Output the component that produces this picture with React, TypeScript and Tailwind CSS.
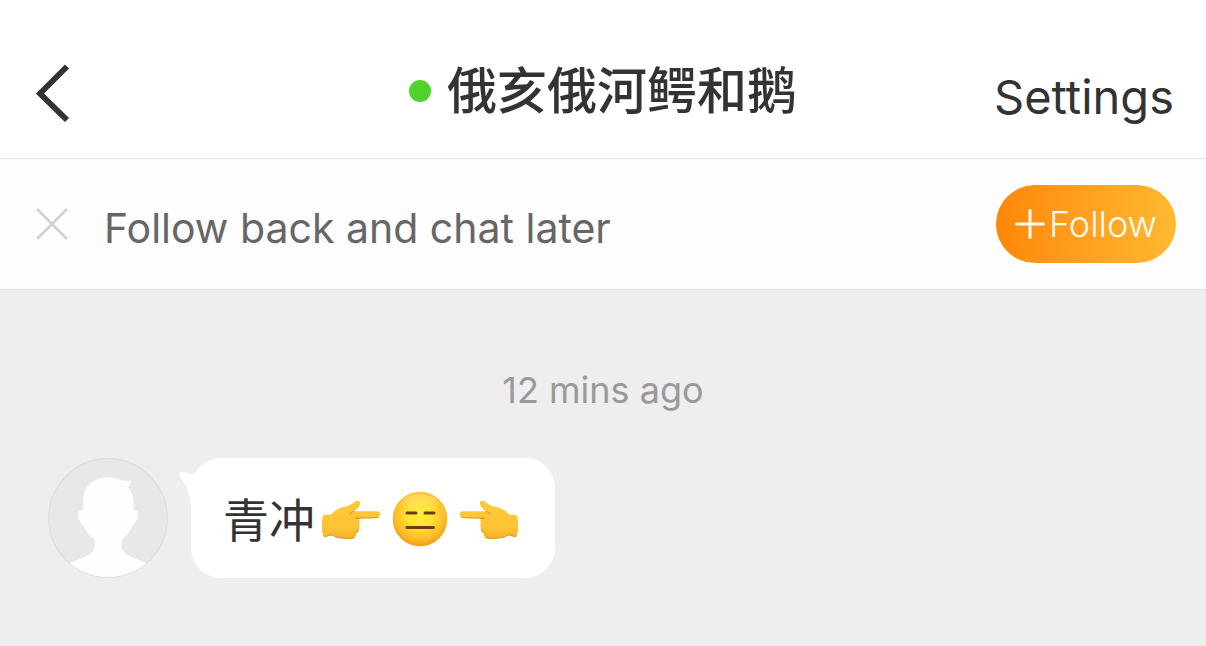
import React from "react";

interface IconProps {
  className?: string;
}

const BackIcon = ({ className }: IconProps) => (
  <svg viewBox="0 0 34 58" className={className} fill="none" stroke="#333333" strokeWidth="5.8" aria-hidden="true">
    <path d="M31 2.500 4 29.500 31 56" />
  </svg>
);

const CloseIcon = ({ className }: IconProps) => (
  <svg viewBox="0 0 32 32" className={className} fill="none" stroke="#cfcfcf" strokeWidth="2.6" strokeLinecap="round" aria-hidden="true">
    <path d="M2 2 30 30M30 2 2 30" />
  </svg>
);

const PlusIcon = ({ className }: IconProps) => (
  <svg viewBox="0 0 30 30" className={className} fill="none" stroke="#fffaf0" strokeWidth="3" strokeLinecap="round" aria-hidden="true">
    <path d="M15 1.5v27M1.5 15h27" />
  </svg>
);

const Avatar = ({ className }: IconProps) => (
  <svg viewBox="0 0 120 120" className={className} role="img" aria-label="Avatar">
    <defs>
      <clipPath id="avatar-clip">
        <circle cx="60" cy="59" r="60" />
      </clipPath>
    </defs>
    <circle cx="60" cy="60" r="59.3" fill="#e8e8e8" stroke="#dcdcdc" strokeWidth="1.2" />
    <path
      clipPath="url(#avatar-clip)"
      fill="#fefefe"
      d="M35 52V44C35 29 45 19.500 60 19.500C67 19.500 72 23 83 23C83 26 81 28 80 29.500C84 34 85.500 39 85.500 45V52C89 52 90.500 54 90 58C89 64 86 66 84 69C81 74 79 78 75 81C73 84 73 88 74 91C79 99 89 101 98 105L108 120H12L22 105C31 101 41 99 46 91C47.500 88 47 84 45.500 81C41 78 39 74 36 69C34 66 31 64 30 58C29.500 54 31 52 35 52Z"
    />
  </svg>
);

const PointingHand = ({ className }: IconProps) => (
  <svg viewBox="0 0 183 126" className={className} aria-hidden="true">
    <defs>
      <linearGradient id="hand-fill" x1="0" y1="0" x2="0" y2="1">
        <stop offset="0" stopColor="#ffc83a" />
        <stop offset="0.7" stopColor="#ffc335" />
        <stop offset="1" stopColor="#f5b02c" />
      </linearGradient>
    </defs>
    <path
      fill="url(#hand-fill)"
      d="M10 52C17 48 23 52 30 50C38 48 39 42 47 37C60 27 80 27 89 22C98 17 102 12 108 9C116 6 123 12 120 21C117 30 108 34 102 40H171C184 40 184 59 171 60L117 62C118 67 121 70 117 76C121 83 119 88 115 93C117 101 113 104 109 105C109 116 105 121 97 122C80 125 64 121 50 119C41 114 37 112 30 113C23 114 18 119 12 117C7 108 5 98 6 82C6 68 6 59 10 52Z"
    />
    <path d="M102 40C96 43 92 46 88 48M106 61H118M109 105C111 104 115 100 115 93" fill="none" stroke="#db8c1e" strokeWidth="3" strokeLinecap="round" />
    <path d="M116 60C135 60 160 60 174 58M12 115C18 117 23 111 31 111C40 111 44 118 54 118C74 122 91 122 102 119" fill="none" stroke="#e39b24" strokeWidth="3" strokeLinecap="round" />
  </svg>
);

const ExpressionlessFace = ({ className }: IconProps) => (
  <svg viewBox="0 0 56 56" className={className} aria-hidden="true">
    <defs>
      <radialGradient id="face-fill" cx="0.5" cy="0.42" r="0.6">
        <stop offset="0" stopColor="#ffee35" />
        <stop offset="0.4" stopColor="#ffe033" />
        <stop offset="0.78" stopColor="#fdb928" />
        <stop offset="1" stopColor="#ee9312" />
      </radialGradient>
      <linearGradient id="face-shine" x1="0" y1="0" x2="0" y2="1">
        <stop offset="0" stopColor="#ffe489" stopOpacity="0.55" />
        <stop offset="1" stopColor="#ffe489" stopOpacity="0" />
      </linearGradient>
    </defs>
    <circle cx="28" cy="28" r="27.3" fill="url(#face-fill)" />
    <ellipse cx="28" cy="12" rx="18" ry="9" fill="url(#face-shine)" />
    <path d="M15 22h9M33 22h9M15 36.500h26.500" fill="none" stroke="#6b3c08" strokeWidth="3" strokeLinecap="round" />
  </svg>
);

const Header = () => (
  <header className="grid grid-cols-[1fr_auto_1fr] items-center border-b border-[#e3e3e3] bg-white px-8 pt-7 pb-1 text-[#333333]">
    <button type="button" aria-label="Back" className="justify-self-start pl-1 pt-1">
      <BackIcon className="h-[58px] w-[34px]" />
    </button>
    <div className="flex items-center gap-4">
      <span className="size-[22px] rounded-full bg-[#4fd22b]" />
      <h1 className="text-[50px] leading-[126px] font-medium">俄亥俄河鳄和鹅</h1>
    </div>
    <button type="button" className="justify-self-end pt-3 text-[47px]">
      Settings
    </button>
  </header>
);

const FollowBar = () => (
  <section className="flex items-center border-b border-[#e0e0e0] bg-[#fdfdfd] py-[26px] pl-9 pr-[30px]">
    <button type="button" aria-label="Close">
      <CloseIcon className="size-8" />
    </button>
    <p className="ml-9 flex-1 pt-2 text-[41px] leading-[50px] text-[#666666]">Follow back and chat later</p>
    <button
      type="button"
      className="flex h-[78px] w-[180px] items-center justify-center gap-1 rounded-full bg-linear-to-r from-[#ff8705] to-[#ffb931] text-4xl text-[#fffaf0]"
    >
      <PlusIcon className="size-[30px] shrink-0" />
      <span className="font-light">Follow</span>
    </button>
  </section>
);

const Message = () => (
  <div className="flex items-start gap-[23px]">
    <Avatar className="size-[120px] shrink-0" />
    <div className="relative flex h-[120px] items-center rounded-[30px] bg-white pl-8 pr-[35px]">
      <svg viewBox="0 0 24 44" className="absolute top-3 -left-3 h-11 w-6" fill="#ffffff" aria-hidden="true">
        <path d="M24 0C20 1 18 3 16 4C11 4 7 2 3 2C0 2 0 5 1 7C6 14 12 22 12 40L24 44Z" />
      </svg>
      <p className="pt-1 text-[46px] leading-[60px] text-[#333333]">青冲</p>
      <div className="ml-[5px] flex items-center gap-[11px] pt-px">
        <PointingHand className="h-[42px] w-[61px]" />
        <ExpressionlessFace className="size-14" />
        <PointingHand className="h-[42px] w-[61px] -scale-x-100" />
      </div>
    </div>
  </div>
);

const App = () => {
  return (
    <div className="flex min-h-screen flex-col bg-[#eeeeee] font-[Inter,'Noto_Sans_CJK_SC',sans-serif]">
      <Header />
      <FollowBar />
      <main className="flex-1 px-12 pt-[76px]">
        <p className="mb-11 text-center text-4xl leading-[48px] text-[#999999]">12 mins ago</p>
        <Message />
      </main>
    </div>
  );
};

export default App;
